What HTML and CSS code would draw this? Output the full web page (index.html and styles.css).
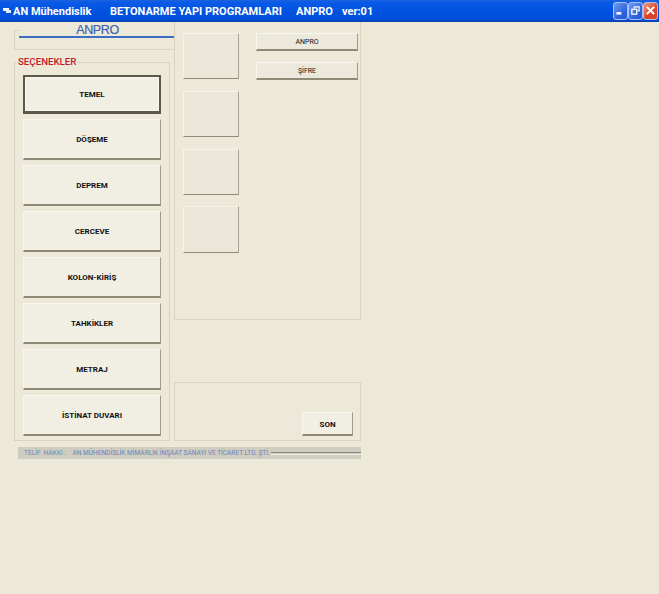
FILE: index.html
```html
<!DOCTYPE html>
<html lang="tr">
<head>
<meta charset="utf-8">
<title>ANPRO</title>
<link rel="stylesheet" href="styles.css">
</head>
<body>
<div class="titlebar">
  <div class="title-left">
    <svg class="app-icon" width="8" height="8" viewBox="0 0 8 8"><path d="M0 1h6v2h2v3H3V4H0z" fill="#e8eef8"/><path d="M0 1h6v1H0z" fill="#fff"/></svg>
    <span class="title-a">AN Mühendislik</span>
    <span class="title-b">BETONARME YAPI PROGRAMLARI</span>
    <span class="title-c">ANPRO</span>
    <span class="title-d">ver:01</span>
  </div>
  <div class="controls">
    <div class="ctl ctl-blue">
      <svg width="16" height="16" viewBox="0 0 16 16"><rect x="3" y="10" width="6" height="3" fill="#fff"/></svg>
    </div>
    <div class="ctl ctl-blue">
      <svg width="16" height="16" viewBox="0 0 16 16"><path d="M6.5 3.5h6v5h-2M6.5 3.5v2" fill="none" stroke="#fff" stroke-width="1.4"/><rect x="3.5" y="6.5" width="6" height="6" fill="none" stroke="#fff" stroke-width="1.6"/></svg>
    </div>
    <div class="ctl ctl-red">
      <svg width="16" height="16" viewBox="0 0 16 16"><path d="M3.5 3.5l9 9M12.5 3.5l-9 9" stroke="#fff" stroke-width="2.4"/></svg>
    </div>
  </div>
</div>
<main class="form">
  <div class="columns">
    <div class="left">
      <div class="heading-box">
        <div class="heading">ANPRO</div>
      </div>
      <fieldset class="group">
        <legend class="group-label">SEÇENEKLER</legend>
        <button class="btn btn-big btn-default">TEMEL</button>
        <button class="btn btn-big">DÖŞEME</button>
        <button class="btn btn-big">DEPREM</button>
        <button class="btn btn-big">CERCEVE</button>
        <button class="btn btn-big">KOLON-KİRİŞ</button>
        <button class="btn btn-big">TAHKİKLER</button>
        <button class="btn btn-big">METRAJ</button>
        <button class="btn btn-big">İSTİNAT DUVARI</button>
      </fieldset>
    </div>
    <div class="right">
      <div class="panel-top">
        <div class="squares">
          <div class="square"></div>
          <div class="square"></div>
          <div class="square"></div>
          <div class="square"></div>
        </div>
        <div class="small-btns">
          <button class="btn btn-small">ANPRO</button>
          <button class="btn btn-small">ŞİFRE</button>
        </div>
      </div>
      <div class="panel-bottom">
        <button class="btn btn-son">SON</button>
      </div>
    </div>
  </div>
  <div class="status">
    <span class="status-text">TELİF&nbsp; HAKKI :&nbsp;&nbsp;&nbsp; AN MÜHENDİSLİK MİMARLIK İNŞAAT SANAYI VE TİCARET LTD. ŞTİ.</span>
    <span class="status-lines"></span>
  </div>
</main>
</body>
</html>
```
FILE: styles.css
```css
* { box-sizing: border-box; }
html, body { margin: 0; height: 100%; }
body {
  background: #ece9d8;
  overflow: hidden;
  font-family: Roboto, "Liberation Sans", sans-serif;
}
.titlebar {
  height: 22px;
  display: flex;
  justify-content: space-between;
  align-items: center;
  background: linear-gradient(180deg, #1a62de 0%, #0a5ae8 12%, #0052e0 50%, #0450dc 85%, #0a3fb0 100%);
  padding: 0 1px 0 3px;
}
.title-left {
  display: flex;
  align-items: center;
  color: #fff;
  font-family: Roboto, sans-serif;
  font-weight: 700;
  font-size: 11px;
  white-space: nowrap;
}
.app-icon { margin-right: 2px; }
.title-a { width: 97px; }
.title-b { width: 186px; }
.title-c { width: 46px; }
.controls { display: flex; margin-top: -1px; }
.ctl {
  width: 15px;
  height: 18px;
  border: 1px solid #a8c0f0;
  border-radius: 3px;
  display: flex;
  align-items: center;
  justify-content: center;
}
.ctl svg { width: 13px; height: 13px; }
.ctl-blue { background: linear-gradient(135deg, #6f9cf0, #2a5fdc 70%); }
.ctl-red { background: linear-gradient(135deg, #ee9a80, #d8442a 60%); }

.form {
  width: 361px;
  margin-left: 14px;
}
.columns { display: flex; }
.left { width: 160px; padding-top: 8px; }
.heading-box {
  height: 20px;
  border: 1px solid #d8d4c0;
  border-right: 0;
  padding-left: 4px;
}
.heading {
  height: 16px;
  margin-top: -9px;
  background: #ece9d8;
  border-bottom: 2px solid #3f6cc4;
  color: #3a62b0;
  font-family: "Liberation Sans", sans-serif;
  font-size: 12.5px;
  letter-spacing: -0.4px;
  line-height: 16px;
  -webkit-text-stroke: 0.2px #3a62b0;
  text-align: center;
  padding-left: 2px;
}
.group {
  width: 156px;
  height: 385px;
  margin: 6px 0 0;
  padding: 0 8px;
  border: 1px solid #d8d4c0;
  display: flex;
  flex-direction: column;
  gap: 5px;
}
.group-label {
  color: #c0202c;
  font-size: 9.7px;
  font-weight: 500;
  padding: 0 1px;
  margin-left: -6px;
  line-height: 12px;
  margin-bottom: 7px;
}
.btn {
  display: block;
  font-family: Roboto, "Liberation Sans", sans-serif;
  background: #f1eee3;
  color: #111;
  border: 0;
  border-top: 1px solid #f8f6ee;
  border-left: 1px solid #f8f6ee;
  border-right: 1px solid #a09c88;
  border-bottom: 2px solid #8e8a76;
  padding: 1px 0 0;
  text-align: center;
}
.btn-big {
  width: 138px;
  height: 41px;
  flex: none;
  font-size: 8px;
  font-weight: 700;
}
.btn-default {
  height: 39px;
  padding-top: 0;
  border: 2px solid #5c5848;
  border-bottom-width: 3px;
  box-shadow: inset 0 0 0 1px #f8f6ee;
}
.right { width: 187px; }
.panel-top {
  height: 298px;
  border: 1px solid #d8d4c0;
  border-top: 0;
  padding: 11px 3px 0 8px;
  display: flex;
  gap: 17px;
}
.squares { display: flex; flex-direction: column; gap: 11.5px; }
.square {
  width: 56px;
  height: 46.3px;
  background: #ebe8da;
  border-top: 1px solid #f6f4ea;
  border-left: 1px solid #f6f4ea;
  border-right: 1px solid #a8a490;
  border-bottom: 1px solid #8e8a76;
}
.small-btns { display: flex; flex-direction: column; gap: 11px; }
.btn-small {
  width: 102px;
  height: 18px;
  font-size: 7px;
  font-weight: 400;
  background: #ece9dc;
}
.panel-bottom {
  height: 59px;
  margin-top: 62px;
  border: 1px solid #d8d4c0;
  display: flex;
  justify-content: flex-end;
  align-items: flex-end;
  padding: 0 7px 4px 0;
}
.btn-son {
  width: 51px;
  height: 24px;
  font-size: 8px;
  font-weight: 700;
}
.status {
  margin: 6px 0 0 4px;
  width: 343px;
  height: 12px;
  background: #cfcdc0;
  display: flex;
  align-items: center;
  padding-left: 6px;
  overflow: hidden;
}
.status-text {
  color: #6a84c0;
  font-size: 6.55px;
  line-height: 11px;
  white-space: nowrap;
}
.status-lines {
  flex: 1;
  height: 3px;
  margin-left: 1px;
  border-top: 1px solid #8e8c80;
  border-bottom: 1px solid #f0eee4;
}
```
